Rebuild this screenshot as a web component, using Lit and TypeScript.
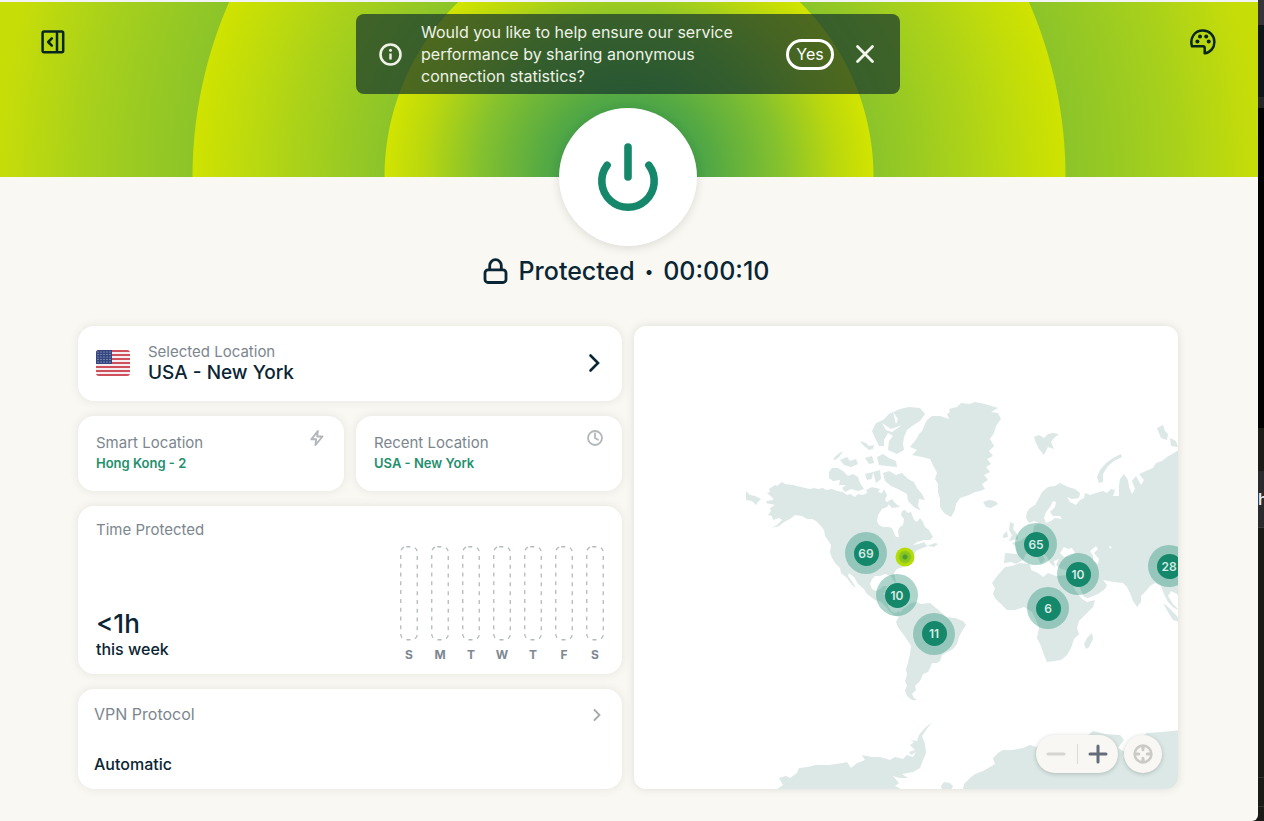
import { LitElement, html, css, svg } from "lit";
import { customElement, property, state } from "lit/decorators.js";
import { styleMap } from "lit/directives/style-map.js";

const LAND = [
  // North America, mainland
  "M767 493L770 492L769 489L775 485L777 486L782 482L785 484L793 485L801 487L810 489L814 488L818 489L823 488L826 490L832 489L837 491L843 492L847 495L850 494L855 497L858 494L863 495L867 493L873 494L877 492L882 493L884 489L887 495L885 500L889 504L887 507L882 509L878 515L877 521L879 525L883 527L888 527L892 528L894 533L896 537L899 537L898 531L899 528L903 525L904 519L901 515L902 511L905 510L908 513L911 512L914 520L917 522L920 518L923 522L925 527L929 530L933 537L930 540L924 540L917 542L913 545L919 544L924 542L927 546L935 543L938 544L934 547L928 546L920 549L916 551L914 555L911 558L908 563L903 567L897 569L894 573L895 577L896 583L893 580L891 576L885 574L880 576L875 576L872 579L870 584L872 589L876 591L880 589L883 586L887 586L885 592L883 594L888 596L889 600L888 606L892 612L896 613L899 611L902 613L900 617L895 616L890 612L886 607L881 602L875 600L867 594L864 589L858 584L854 577L849 573L848 576L853 583L856 588L852 585L847 578L841 573L840 568L835 563L832 558L830 552L831 545L828 540L825 536L824 530L820 525L816 521L812 519L807 519L802 516L795 515L790 519L784 522L779 526L772 528L777 525L782 520L779 518L773 520L772 516L768 515L771 511L770 508L775 505L766 503L767 501L773 500L773 498Z",
  "M746 491L750 495L755 496L761 499L758 502L756 505L752 501L746 500Z",
  // Arctic archipelago
  "M829 472L832 468L838 468L843 471L848 476L853 474L858 477L860 483L864 489L858 491L851 489L845 492L842 488L846 485L839 485L840 480L833 481L829 478Z",
  "M833 459L838 454L843 451L839 457L835 460ZM840 460L847 457L850 461L856 459L858 464L851 467L844 465Z",
  "M860 441L866 443L869 446L874 445L873 449L869 450L863 445ZM865 458L872 456L874 463L869 464Z",
  "M872 431L876 423L883 420L889 414L900 409L909 407L920 408L925 414L920 421L912 426L907 430L904 437L903 444L904 450L897 454L888 450L889 441L893 436L888 433L884 440L884 446L879 446L875 438Z",
  "M877 457L883 454L889 458L896 461L897 467L887 466L879 465ZM865 474L873 472L872 479L867 480ZM873 472L880 470L881 479L876 483Z",
  "M883 473L889 471L896 475L902 473L908 479L914 482L917 488L922 494L925 500L919 499L918 506L921 511L914 507L908 501L907 494L898 489L891 486L885 481Z",
  "M866 490L872 487L880 489L876 495L868 494ZM887 502L892 499L895 503L900 507L892 508Z",
  // Greenland
  "M910 447L914 442L917 438L919 434L922 431L925 424L927 420L932 416L940 416L949 419L947 414L950 412L949 409L957 407L961 403L970 404L975 402L985 404L998 408L991 412L998 413L1001 419L996 426L994 433L990 439L994 446L989 451L993 456L987 459L991 464L986 467L990 472L984 475L988 480L982 484L985 489L980 491L975 492L969 495L960 498L956 504L955 510L951 517L944 513L940 507L940 499L938 492L938 484L935 479L937 473L933 465L930 459L922 457L912 455L917 450Z",
  "M983 502L989 500L995 501L998 504L991 508L986 507Z",
  // South America
  "M900 615L902 610L906 607L911 603L916 602L921 604L930 603L936 608L942 613L946 617L955 618L963 621L966 625L962 631L959 637L957 644L953 649L947 652L942 655L940 661L937 663L932 663L930 668L928 672L923 674L921 679L919 682L915 686L916 690L912 694L914 698L917 700L912 700L907 696L905 690L907 686L905 681L907 675L906 669L908 663L910 654L911 646L908 641L903 634L898 627L896 622L898 618Z",
  // Eurasia
  "M1027 512L1030 508L1035 505L1039 498L1042 492L1048 487L1055 486L1060 483L1068 487L1075 489L1080 493L1079 498L1072 499L1067 497L1070 502L1076 505L1080 500L1084 498L1085 493L1090 495L1096 493L1103 491L1107 493L1111 489L1115 490L1113 496L1119 496L1119 486L1120 479L1124 474L1128 480L1129 487L1132 494L1135 489L1132 481L1136 476L1141 485L1144 480L1139 474L1146 471L1153 468L1156 463L1162 461L1167 457L1174 453L1180 449L1180 600L1177 594L1171 591L1168 596L1173 604L1179 610L1174 608L1168 602L1164 594L1161 586L1155 583L1150 586L1146 591L1141 596L1141 602L1137 607L1133 601L1130 593L1127 587L1123 583L1114 582L1103 580L1107 585L1105 589L1098 594L1088 598L1084 597L1080 588L1074 578L1070 573L1067 570L1061 569L1056 565L1059 559L1054 561L1055 567L1050 563L1047 557L1042 553L1045 560L1041 564L1037 557L1032 552L1026 554L1023 560L1016 564L1011 562L1004 563L1005 553L1017 554L1016 547L1012 543L1020 541L1027 536L1033 533L1034 526L1039 523L1034 521L1029 523L1026 518Z",
  "M1010 522L1014 524L1013 529L1017 534L1018 539L1009 541L1012 535L1009 530ZM1003 535L1007 531L1008 537L1003 538Z",
  "M1034 437L1039 435L1044 438L1048 434L1053 433L1059 434L1054 438L1051 442L1054 449L1048 447L1044 455L1039 449L1036 443Z",
  "M1099 483L1097 477L1100 470L1106 463L1113 458L1121 454L1122 457L1114 461L1108 466L1103 474L1103 482Z",
  "M1157 428L1163 425L1165 431L1168 434L1167 440L1161 438ZM1170 438L1176 441L1178 447L1171 446Z",
  // Africa
  "M1005 567L1012 566L1020 563L1030 564L1031 570L1038 573L1043 577L1048 573L1056 576L1067 575L1072 583L1075 590L1082 599L1087 602L1095 600L1093 607L1085 615L1079 621L1077 628L1079 634L1074 639L1071 648L1067 655L1061 660L1054 661L1047 662L1044 655L1041 646L1037 638L1039 628L1036 620L1032 612L1024 607L1015 610L1007 610L1001 604L995 598L993 594L995 588L992 583L998 575Z",
  "M1092 633L1093 639L1089 647L1086 649L1084 644L1087 638Z",
  "M1163 603L1168 607L1177 616L1180 622L1173 620L1168 612ZM886 588L896 591L905 594L908 596L901 596L894 592Z",
  // Antarctica
  "M776 790L783 785L779 778L786 776L790 778L797 773L799 768L808 767L815 765L829 765L843 763L847 762L851 768L857 763L865 760L862 755L872 757L880 757L890 760L895 757L903 759L907 755L913 757L916 752L911 755L909 752L915 750L910 745L914 742L910 740L917 741L919 735L925 728L932 722L926 730L922 736L925 744L926 753L923 760L920 768L913 772L902 774L908 778L900 778L893 776L899 783L895 786L903 790Z",
  "M963 790L964 784L970 778L975 774L983 771L990 767L995 764L993 758L998 753L1003 750L1012 750L1023 748L1030 745L1036 747L1048 740L1062 738L1076 737L1087 736L1093 731L1105 734L1120 735L1124 740L1118 748L1125 752L1122 758L1130 748L1136 740L1147 733L1162 732L1172 731L1180 730L1180 790ZM941 786L944 782L950 783L953 786L951 790L942 790Z",
];

const WATER = [
  "M1053 501L1050 507L1046 512L1044 518L1046 523L1051 521L1055 518L1062 519L1060 516L1053 516L1050 512L1055 507L1056 502Z",
  "M1060 553L1064 547L1068 549L1072 548L1075 553L1070 556L1064 557ZM1090 551L1096 546L1098 549L1094 553L1099 559L1098 564L1093 561L1093 556ZM1109 546L1112 547L1110 549Z",
  "M882 423L891 429L902 425L892 432L886 430ZM893 412L898 419L896 424Z",
];

interface Pin { label: string; x: number; y: number; }
const MAP = { x: 634, y: 326, w: 544, h: 463 };
const PINS: Pin[] = [
  { label: "69", x: 866, y: 553 },
  { label: "10", x: 897, y: 595 },
  { label: "11", x: 934, y: 634 },
  { label: "65", x: 1036, y: 544 },
  { label: "10", x: 1078, y: 574 },
  { label: "6", x: 1048, y: 608 },
  { label: "28", x: 1169, y: 566 },
];
const place = (x: number, y: number) =>
  styleMap({
    left: `${((x - MAP.x) / MAP.w) * 100}%`,
    top: `${((y - MAP.y) / MAP.h) * 100}%`,
  });

const shared = css`
  * { box-sizing: border-box; }
  button {
    font: inherit; color: inherit; background: none; border: 0;
    padding: 0; margin: 0; text-align: left; cursor: pointer;
  }
  svg { display: block; flex: none; }
`;

@customElement("stats-toast")
class StatsToast extends LitElement {
  static styles = [shared, css`
    :host {
      display: flex; align-items: center; width: 544px; max-width: 100%;
      min-height: 80px; padding: 7px 24px 7px 22px; border-radius: 8px;
      background: rgba(21, 52, 44, 0.7); color: #eef3e6;
      font-size: 16px; line-height: 22px;
    }
    p { flex: 1; margin: 0 28px 0 18px; }
    .yes {
      border: 3px solid #fff; border-radius: 16px; height: 31px;
      width: 48px; text-align: center; color: #fff; margin-right: 20px;
    }
  `];
  render() {
    return html`
      <svg width="25" height="25" viewBox="0 0 25 25" fill="none" stroke="#eef3e6" stroke-width="2.6">
        <circle cx="12.5" cy="12.5" r="10"></circle>
        <path d="M12.5 11.5v6" stroke-width="2.4"></path>
        <circle cx="12.5" cy="8.3" r="1.5" fill="#eef3e6" stroke="none"></circle>
      </svg>
      <p>Would you like to help ensure our service performance by sharing anonymous connection statistics?</p>
      <button class="yes">Yes</button>
      <button aria-label="Dismiss">
        <svg width="22" height="22" viewBox="0 0 22 22" fill="none" stroke="#f4f7ee" stroke-width="2.8" stroke-linecap="round">
          <path d="M3.500 3.500l15 15M18.500 3.500L3.500 18.500"></path>
        </svg>
      </button>`;
  }
}

@customElement("week-chart")
class WeekChart extends LitElement {
  @property({ type: Array }) days = ["S", "M", "T", "W", "T", "F", "S"];
  static styles = [shared, css`
    :host { display: flex; gap: 13px; }
    .day {
      display: flex; flex-direction: column; align-items: center; gap: 6px;
      width: 18px; font-size: 12px; line-height: 16px; font-weight: 700; color: #7d8891;
    }
  `];
  render() {
    return this.days.map((d) => html`
      <div class="day">
        <svg width="18" height="95" viewBox="0 0 18 95" fill="none">
          <rect x="0.75" y="0.75" width="16.5" height="93" rx="5.5" stroke="#b4b9bc" stroke-width="1.3" stroke-dasharray="4 4.8"></rect>
        </svg>
        <span>${d}</span>
      </div>`);
  }
}

@customElement("server-map")
class ServerMap extends LitElement {
  static styles = [shared, css`
    :host {
      display: block; position: relative; overflow: hidden; min-height: 320px;
      border-radius: 12px; background: #fff; box-shadow: 0 0 8px rgba(60, 60, 40, 0.14);
    }
    .world { position: absolute; inset: 0; width: 100%; height: 100%; }
    .pin {
      position: absolute; transform: translate(-50%, -50%);
      display: grid; place-items: center; width: 42px; height: 42px;
      border-radius: 50%; background: rgba(21, 135, 106, 0.35);
    }
    .pin span {
      width: 25px; height: 25px; border-radius: 50%; background: #15876a;
      color: #d5ece5; font-size: 12px; line-height: 25px; font-weight: 600; text-align: center;
    }
    .here {
      position: absolute; transform: translate(-50%, -50%);
      width: 19px; height: 19px; border-radius: 50%;
      background: radial-gradient(circle, #4c9c30 0 2px, #86c41f 3px 5px, #9dce18 6px, #b4dd08 7px);
    }
    .controls { position: absolute; right: 16px; bottom: 16px; display: flex; gap: 6px; }
    .zoom, .locate {
      display: flex; align-items: center; justify-content: center; height: 38px;
      border-radius: 19px; background: #f8f7f3; box-shadow: 0 1px 4px rgba(40, 50, 50, 0.25);
    }
    .zoom { width: 82px; }
    .zoom button { flex: 1; display: grid; place-items: center; height: 38px; }
    .rule { width: 1px; height: 20px; background: #dbdad6; }
    .locate { width: 38px; }
  `];
  render() {
    return html`
      <svg class="world" viewBox="634 326 544 463" preserveAspectRatio="none" aria-hidden="true">
        ${LAND.map((d) => svg`<path d=${d} fill="#dbe8e6"></path>`)}
        ${WATER.map((d) => svg`<path d=${d} fill="#fff"></path>`)}
      </svg>
      <div class="here" style=${place(905, 557)}></div>
      ${PINS.map((p) => html`<button class="pin" style=${place(p.x, p.y)}><span>${p.label}</span></button>`)}
      <div class="controls">
        <div class="zoom">
          <button aria-label="Zoom out">
            <svg width="20" height="20" viewBox="0 0 20 20"><path d="M2 10h16" stroke="#d6d5d1" stroke-width="3" stroke-linecap="round"></path></svg>
          </button>
          <span class="rule"></span>
          <button aria-label="Zoom in">
            <svg width="20" height="20" viewBox="0 0 20 20"><path d="M2 10h16M10 2v16" stroke="#636c78" stroke-width="3" stroke-linecap="round"></path></svg>
          </button>
        </div>
        <button class="locate" aria-label="Centre map">
          <svg width="20" height="20" viewBox="0 0 20 20" fill="none" stroke="#cbcac6">
            <circle cx="10" cy="10" r="8.400" stroke-width="2.600"></circle>
            <path d="M10 3v2.800M10 14.200v2.800M3 10h2.800M14.200 10h2.800" stroke-width="3" stroke-linecap="round"></path>
          </svg>
        </button>
      </div>`;
  }
}

@customElement("app-root")
class AppRoot extends LitElement {
  @state() private elapsed = "00:00:10";

  static styles = [shared, css`
    :host {
      display: flex; min-height: 100vh; background: #1a1a18; overflow: hidden;
      font-family: Inter, "Liberation Sans", sans-serif; color: #0a2533;
    }
    .window {
      flex: 1; min-width: 0; background: #f9f8f3; border-top: 2px solid #f1f3f6;
      border-radius: 0 0 6px 0; display: flex; flex-direction: column;
    }
    .hero {
      display: flex; justify-content: space-between; align-items: flex-start;
      height: 175px; padding: 12px 42px 12px 40px;
      background: radial-gradient(circle at 50% 100%,
        #45a04b 0, #4aa448 70px, #84c12e 150px, #b9d70f 205px, #d2e400 244px,
        #8bc42a 245px, #add318 340px, #d0e300 436px,
        #8cc429 437px, #a6d01c 540px, #c7dd08 630px);
    }
    .tool { width: 26px; height: 26px; margin-top: 15px; display: grid; place-items: center; color: #07261f; }
    .status { display: flex; flex-direction: column; align-items: center; margin-top: -69px; padding-right: 2px; }
    .power {
      display: grid; place-items: center; width: 138px; height: 138px; border-radius: 50%;
      background: #fff; box-shadow: 0 2px 10px rgba(40, 50, 30, 0.14);
    }
    .state {
      display: flex; align-items: center; gap: 11px; margin: 9px 0 39px;
      padding-right: 4px; font-size: 25px; line-height: 32px; font-weight: 500;
    }
    .state .line { display: flex; align-items: center; gap: 10px; }
    .state .dot { font-size: 16px; }
    main {
      display: grid; grid-template-columns: 1fr 1fr; gap: 12px;
      padding: 0 80px 32px 78px;
    }
    .cards { display: flex; flex-direction: column; gap: 15px; min-width: 0; }
    .card {
      background: #fff; border-radius: 16px; box-shadow: 0 0 10px rgba(60, 60, 40, 0.11);
    }
    .label { display: block; font-size: 15px; line-height: 20px; color: #7c868e; }
    .selected { display: flex; align-items: center; min-height: 75px; padding: 15px 18px 17px; }
    .selected .text { flex: 1; margin-left: 18px; }
    .place { display: block; font-size: 19px; line-height: 22px; font-weight: 500; }
    .pair { display: grid; grid-template-columns: 1fr 1fr; gap: 12px; }
    .quick { display: flex; justify-content: space-between; align-items: flex-start; padding: 13px 18px 18px; }
    .quick .text { padding-top: 4px; }
    .green { display: block; font-size: 13px; line-height: 20px; font-weight: 600; color: #1f8f6d; }
    .time { display: flex; justify-content: space-between; padding: 14px 18px 11px; }
    .time .text { display: flex; flex-direction: column; }
    .total { margin-top: auto; font-size: 26px; line-height: 28px; font-weight: 500; }
    .period { font-size: 16px; line-height: 22px; font-weight: 500; margin-bottom: 3px; }
    .time week-chart { margin-top: 26px; }
    .protocol { display: flex; justify-content: space-between; align-items: flex-start; padding: 15px 16px 14px; }
    .protocol .label { font-size: 16px; }
    .protocol .value { display: block; margin-top: 29px; font-size: 16px; line-height: 22px; font-weight: 500; }
    .protocol svg { margin: 4px 2px; }
    .behind {
      width: 6px; overflow: hidden; color: #e8e8ea; display: flex; flex-direction: column;
      font-size: 16px; font-weight: 600; line-height: 56px; background: #1a1a18;
    }
    .seg { flex: none; overflow: hidden; }
    .s1 { height: 25px; background: #36343a; }
    .s2 { height: 72px; background: #10151a; }
    .s3 { height: 11px; background: #252628; }
    .s4 { height: 320px; background: #020202; }
    .s5 { height: 43px; background: #1d1c19; }
    .s6 { height: 57px; background: #2a2b2d; border-bottom: 1px solid #3c3c3c; }
    .s7 { height: 250px; border-bottom: 1px solid #303030; }
    .s8 { height: 29px; border-bottom: 1px solid #303030; }
  `];

  render() {
    return html`
      <div class="window">
        <header class="hero">
          <button class="tool" aria-label="Collapse panel">
            <svg width="24" height="24" viewBox="0 0 24 24" fill="none" stroke="currentColor" stroke-width="2.500" stroke-linejoin="round">
              <rect x="1.600" y="1.600" width="20.600" height="20.600" rx="1.500"></rect>
              <path d="M16 1.600v20.600"></path>
              <path d="M10.800 8.400L7.200 12L10.800 15.600" stroke-linecap="round" stroke-width="2.600"></path>
            </svg>
          </button>
          <stats-toast></stats-toast>
          <button class="tool" aria-label="Theme">
            <svg width="26" height="26" viewBox="0 0 26 26" fill="none" stroke="currentColor" stroke-width="2.500" stroke-linejoin="round">
              <path d="M2 17.300C-0.500 9 4.500 1.600 13 1.600c6.500 0 11.400 5 11.400 11.300 0 6-4.200 10.900-9.700 11.400v-5.200c0-1.300-.6-1.800-1.800-1.800z"></path>
              <g fill="currentColor" stroke="none">
                <circle cx="7.400" cy="12.400" r="2"></circle><circle cx="10" cy="7.400" r="2"></circle>
                <circle cx="16.200" cy="7.400" r="2"></circle><circle cx="18.700" cy="12.400" r="2"></circle>
              </g>
            </svg>
          </button>
        </header>

        <section class="status">
          <button class="power" aria-label="Disconnect">
            <svg width="62" height="70" viewBox="0 0 62 70" fill="none" stroke="#15876a" stroke-width="7.600" stroke-linecap="round">
              <path d="M31 5v30"></path>
              <path d="M10.100 23.300A26.200 26.200 0 1 0 51.900 23.300"></path>
            </svg>
          </button>
          <div class="state">
            <svg width="25" height="26" viewBox="0 0 25 26" fill="none" stroke="#0a2533" stroke-width="2.800">
              <rect x="2" y="11.800" width="21" height="12.700" rx="3"></rect>
              <path d="M6.700 11.500V7.500a5.600 5.600 0 0 1 11.600 0V11.500"></path>
            </svg>
            <span class="line"><span>Protected</span><span class="dot">•</span><span>${this.elapsed}</span></span>
          </div>
        </section>

        <main>
          <div class="cards">
            <button class="card selected">
              <svg width="34" height="26" viewBox="0 0 34 26">
                <defs><clipPath id="flag"><rect width="34" height="26" rx="3"></rect></clipPath></defs>
                <g clip-path="url(#flag)">
                  <rect width="34" height="26" fill="#f4eef0"></rect>
                  ${[0, 1, 2, 3, 4, 5, 6].map((i) => svg`<rect y=${i * 4} width="34" height="2" fill="#cf4f5c"></rect>`)}
                  <rect width="16" height="14" fill="#34457f"></rect>
                  ${[2, 4.5, 7, 9.5, 12].map((y) => [2, 5, 8, 11, 14].map((x) => svg`<circle cx=${x} cy=${y} r=".6" fill="#c6cce0"></circle>`))}
                </g>
              </svg>
              <span class="text"><span class="label">Selected Location</span><span class="place">USA - New York</span></span>
              <svg width="20" height="20" viewBox="0 0 20 20" fill="none" stroke="#0a2533" stroke-width="2.600" stroke-linecap="round">
                <path d="M6.500 2.500L14 10L6.500 17.500"></path>
              </svg>
            </button>

            <div class="pair">
              <button class="card quick">
                <span class="text"><span class="label">Smart Location</span><span class="green">Hong Kong - 2</span></span>
                <svg width="18" height="18" viewBox="0 0 18 18" fill="none" stroke="#b3b7ba" stroke-width="1.900" stroke-linejoin="round">
                  <path d="M9.800 2L3.300 10.300h4.800L7.500 16L14.500 7.500H9.200z"></path>
                </svg>
              </button>
              <button class="card quick">
                <span class="text"><span class="label">Recent Location</span><span class="green">USA - New York</span></span>
                <svg width="18" height="18" viewBox="0 0 18 18" fill="none" stroke="#b3b7ba" stroke-width="1.800" stroke-linecap="round">
                  <circle cx="9" cy="9" r="7"></circle><path d="M9 4.500V9l3 1.800"></path>
                </svg>
              </button>
            </div>

            <section class="card time">
              <div class="text">
                <span class="label">Time Protected</span>
                <span class="total">&lt;1h</span>
                <span class="period">this week</span>
              </div>
              <week-chart></week-chart>
            </section>

            <button class="card protocol">
              <span><span class="label">VPN Protocol</span><span class="value">Automatic</span></span>
              <svg width="14" height="14" viewBox="0 0 14 14" fill="none" stroke="#a4a8ab" stroke-width="1.800" stroke-linecap="round">
                <path d="M4.500 2L9.500 7L4.500 12"></path>
              </svg>
            </button>
          </div>
          <server-map></server-map>
        </main>
      </div>
      <div class="behind" aria-hidden="true">
        <div class="seg s1"></div><div class="seg s2"></div><div class="seg s3"></div>
        <div class="seg s4"></div><div class="seg s5"></div><div class="seg s6">h</div>
        <div class="seg s7"></div><div class="seg s8"></div>
      </div>`;
  }
}
